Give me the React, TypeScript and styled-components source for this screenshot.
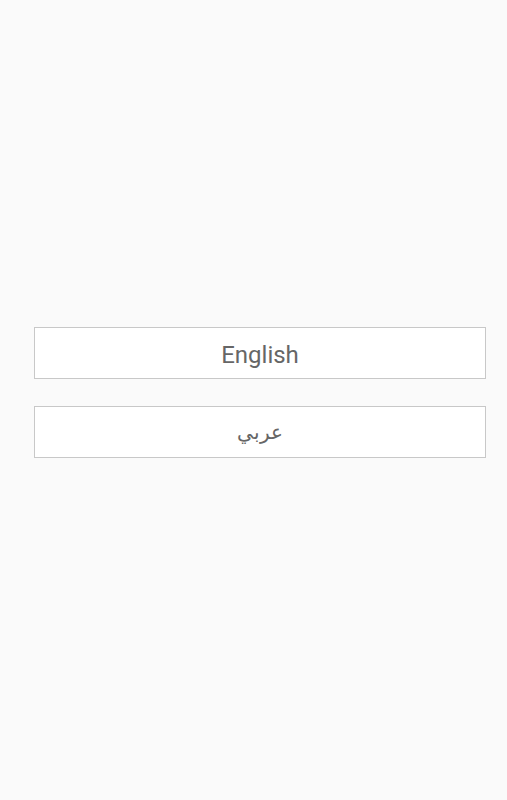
import React from "react";
import styled, { createGlobalStyle } from "styled-components";

const Global = createGlobalStyle`
  html, body { margin: 0; padding: 0; background: #fafafa; }
  body { font-family: Roboto, "Noto Sans", sans-serif; }
`;

const Page = styled.div`
  min-height: 800px;
  box-sizing: border-box;
  padding: 327px 21px 0 34px;
  display: flex;
  flex-direction: column;
  gap: 27px;
  background: #fafafa;
`;

const LangButton = styled.button<{ $arabic?: boolean }>`
  height: 52px;
  width: 100%;
  box-sizing: border-box;
  border: 1px solid #c8c8c8;
  background: #ffffff;
  color: #666666;
  font-family: ${(p) => (p.$arabic ? '"DejaVu Sans", "Noto Sans", sans-serif' : 'Roboto, sans-serif')};
  font-size: ${(p) => (p.$arabic ? "20px" : "24px")};
  font-weight: ${(p) => (p.$arabic ? 300 : 400)};
  display: flex;
  align-items: center;
  justify-content: center;
  padding: ${(p) => (p.$arabic ? "0" : "3px 0 0")};
  cursor: pointer;
`;

export default function App() {
  return (
    <>
      <Global />
      <Page>
        <LangButton>English</LangButton>
        <LangButton $arabic>عربي</LangButton>
      </Page>
    </>
  );
}
